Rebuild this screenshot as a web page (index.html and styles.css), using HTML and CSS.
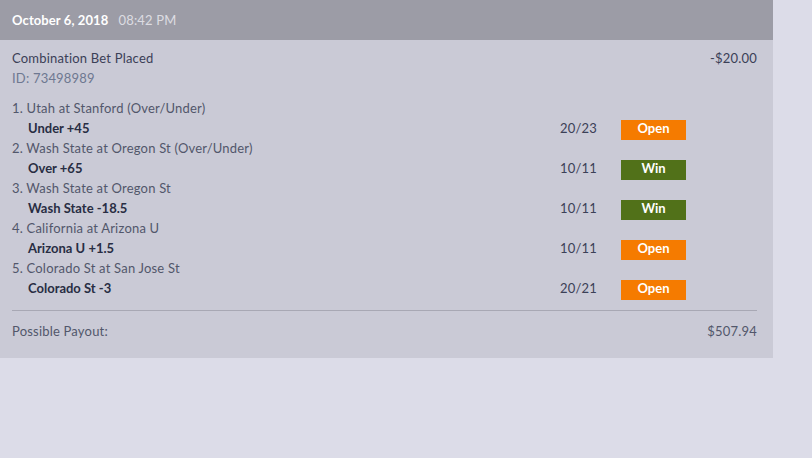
FILE: index.html
```html
<!DOCTYPE html>
<html lang="en">
<head>
    <meta charset="UTF-8">
    <meta name="viewport" content="width=device-width, initial-scale=1.0">
    <title>Bet History</title>
    <link rel="stylesheet" href="styles.css">
</head>
<body>
    <!-- Карточка ставки -->
    <div class="bet-card">
        <div class="bet-head">
            <span class="bet-date">October 6, 2018</span>
            <span class="bet-time">08:42 PM</span>
        </div>

        <div class="bet-body">
            <div class="bet-summary">
                <div>
                    <div class="bet-type">Combination Bet Placed</div>
                    <div class="bet-id">ID: 73498989</div>
                </div>
                <div class="bet-amount">-$20.00</div>
            </div>

            <div class="legs">
                <div class="leg">
                    <div class="leg-title">1. Utah at Stanford (Over/Under)</div>
                    <div class="leg-row">
                        <span class="leg-pick">Under +45</span>
                        <span class="leg-odds">20/23</span>
                        <span class="badge open">Open</span>
                    </div>
                </div>
                <div class="leg">
                    <div class="leg-title">2. Wash State at Oregon St (Over/Under)</div>
                    <div class="leg-row">
                        <span class="leg-pick">Over +65</span>
                        <span class="leg-odds">10/11</span>
                        <span class="badge win">Win</span>
                    </div>
                </div>
                <div class="leg">
                    <div class="leg-title">3. Wash State at Oregon St</div>
                    <div class="leg-row">
                        <span class="leg-pick">Wash State -18.5</span>
                        <span class="leg-odds">10/11</span>
                        <span class="badge win">Win</span>
                    </div>
                </div>
                <div class="leg">
                    <div class="leg-title">4. California at Arizona U</div>
                    <div class="leg-row">
                        <span class="leg-pick">Arizona U +1.5</span>
                        <span class="leg-odds">10/11</span>
                        <span class="badge open">Open</span>
                    </div>
                </div>
                <div class="leg">
                    <div class="leg-title">5. Colorado St at San Jose St</div>
                    <div class="leg-row">
                        <span class="leg-pick">Colorado St -3</span>
                        <span class="leg-odds">20/21</span>
                        <span class="badge open">Open</span>
                    </div>
                </div>
            </div>

            <div class="bet-payout">
                <span>Possible Payout:</span>
                <span class="payout-value">$507.94</span>
            </div>
        </div>
    </div>
</body>
</html>
```

FILE: styles.css
```css
/* Общие стили */
body {
    margin: 0;
    background-color: #dcdce8;
    font-family: Lato, "Noto Sans", sans-serif;
    font-size: 13px;
    line-height: 20px;
    letter-spacing: 0.2px;
    font-variant-ligatures: none;
    color: #3b4057;
}

/* Карточка */
.bet-card {
    width: 773px;
    background-color: #cacad6;
}

.bet-head {
    height: 40px;
    padding: 0 12px;
    display: flex;
    align-items: center;
    gap: 10px;
    background-color: #9c9ca6;
}

.bet-date {
    font-weight: bold;
    letter-spacing: 0.1px;
    color: #ffffff;
}

.bet-time {
    color: #dcdce2;
}

.bet-body {
    padding: 8px 16px 17px 12px;
}

.bet-summary {
    display: flex;
    justify-content: space-between;
}

.bet-id {
    color: #6e7891;
}

/* Список событий */
.legs {
    margin-top: 10px;
    padding-bottom: 12px;
    border-bottom: 1px solid #a8a8b4;
}

.leg-title {
    color: #52576b;
}

.leg-row {
    display: grid;
    grid-template-columns: 1fr 60px 65px;
    column-gap: 24px;
    align-items: start;
    padding-left: 16px;
    padding-right: 71px;
}

.leg-pick {
    font-weight: bold;
    letter-spacing: 0;
    color: #282d43;
}

.leg-odds {
    text-align: right;
}

.badge {
    height: 20px;
    margin-top: 2px;
    margin-bottom: -2px;
    line-height: 16px;
    text-align: center;
    font-weight: bold;
    letter-spacing: 0;
    color: #ffffff;
}

.badge.open {
    background-color: #f57b00;
}

.badge.win {
    background-color: #517119;
}

/* Итог */
.bet-payout {
    display: flex;
    justify-content: space-between;
    padding-top: 10px;
    color: #52576b;
}
```
